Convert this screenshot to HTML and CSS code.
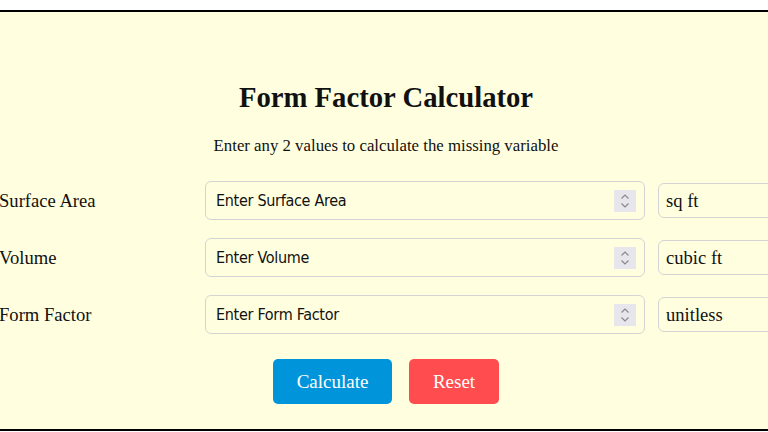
FILE: index.html
```html
<!DOCTYPE html>
<html>
  <head>
    <title>Form Factor Calculator</title>
    <link rel="stylesheet" href="styles.css">
  </head>
  <body>
    <div class="calculator">
      <h1>Form Factor Calculator</h1>
      <p class="intro">Enter any 2 values to calculate the missing variable</p>

      <div class="form-row">
        <label for="area-input">Surface Area</label>
        <div class="number-box">
          <input type="text" id="area-input" placeholder="Enter Surface Area">
          <span class="spinner">
            <svg width="10" height="16" viewBox="0 0 10 16"><path d="M1.5 5.5 L5 2 L8.5 5.5 M1.5 10.5 L5 14 L8.5 10.5" fill="none" stroke="#8a8a8a" stroke-width="1.2"/></svg>
          </span>
        </div>
        <div class="unit-box">sq ft</div>
      </div>
      <div class="form-row">
        <label for="volume-input">Volume</label>
        <div class="number-box">
          <input type="text" id="volume-input" placeholder="Enter Volume">
          <span class="spinner">
            <svg width="10" height="16" viewBox="0 0 10 16"><path d="M1.5 5.5 L5 2 L8.5 5.5 M1.5 10.5 L5 14 L8.5 10.5" fill="none" stroke="#8a8a8a" stroke-width="1.2"/></svg>
          </span>
        </div>
        <div class="unit-box">cubic ft</div>
      </div>
      <div class="form-row">
        <label for="factor-input">Form Factor</label>
        <div class="number-box">
          <input type="text" id="factor-input" placeholder="Enter Form Factor">
          <span class="spinner">
            <svg width="10" height="16" viewBox="0 0 10 16"><path d="M1.5 5.5 L5 2 L8.5 5.5 M1.5 10.5 L5 14 L8.5 10.5" fill="none" stroke="#8a8a8a" stroke-width="1.2"/></svg>
          </span>
        </div>
        <div class="unit-box">unitless</div>
      </div>

      <div class="button-container">
        <button class="calc-button">Calculate</button>
        <button class="reset-button">Reset</button>
      </div>
    </div>
  </body>
</html>
```

FILE: styles.css
```css
body {
  margin: 0;
  background-color: #ffffff;
  font-family: "Liberation Serif", "Times New Roman", serif;
  color: #111111;
  overflow: hidden;
}
.calculator {
  margin-top: 10px;
  margin-left: -22px;
  width: 816px;
  height: 417px;
  background-color: #ffffe0;
  border-top: 2px solid #000000;
  border-bottom: 2px solid #000000;
  overflow: hidden;
}
h1 {
  margin: 69px 0 0 0;
  font-size: 28.7px;
  line-height: 32px;
  text-align: center;
}
.intro {
  margin: 24px 0 26px 0;
  font-size: 16.8px;
  line-height: 18px;
  text-align: center;
}
.form-row {
  display: grid;
  grid-template-columns: 193px 440px 130px;
  column-gap: 13px;
  align-items: center;
  padding-left: 21px;
  margin-bottom: 18px;
}
.form-row label {
  font-size: 18.6px;
}
.number-box {
  display: flex;
  align-items: center;
  height: 37px;
  border: 1px solid #d4d4d4;
  border-radius: 6px;
  padding: 0 8px 0 10px;
}
.number-box input {
  flex: 1;
  border: none;
  background: transparent;
  padding: 0;
  outline: none;
  font-family: "DejaVu Sans Condensed", "DejaVu Sans", sans-serif;
  font-size: 16px;
  letter-spacing: -0.3px;
}
.number-box input::placeholder {
  color: #111111;
  opacity: 1;
}
.spinner {
  display: flex;
  align-items: center;
  justify-content: center;
  width: 22px;
  height: 22px;
  background-color: #e6e6ec;
}
.unit-box {
  height: 33px;
  line-height: 33px;
  border: 1px solid #d4d4d4;
  border-radius: 6px;
  padding-left: 7px;
  font-size: 18.6px;
}
.button-container {
  display: flex;
  justify-content: center;
  gap: 17px;
  margin-top: 25px;
}
button {
  height: 45px;
  border: none;
  border-radius: 5px;
  color: #ffffff;
  font-family: "Liberation Serif", "Times New Roman", serif;
  font-size: 19px;
  cursor: pointer;
}
.calc-button {
  width: 119px;
  background-color: #0095da;
}
.reset-button {
  width: 90px;
  background-color: #ff4d4f;
}
```
